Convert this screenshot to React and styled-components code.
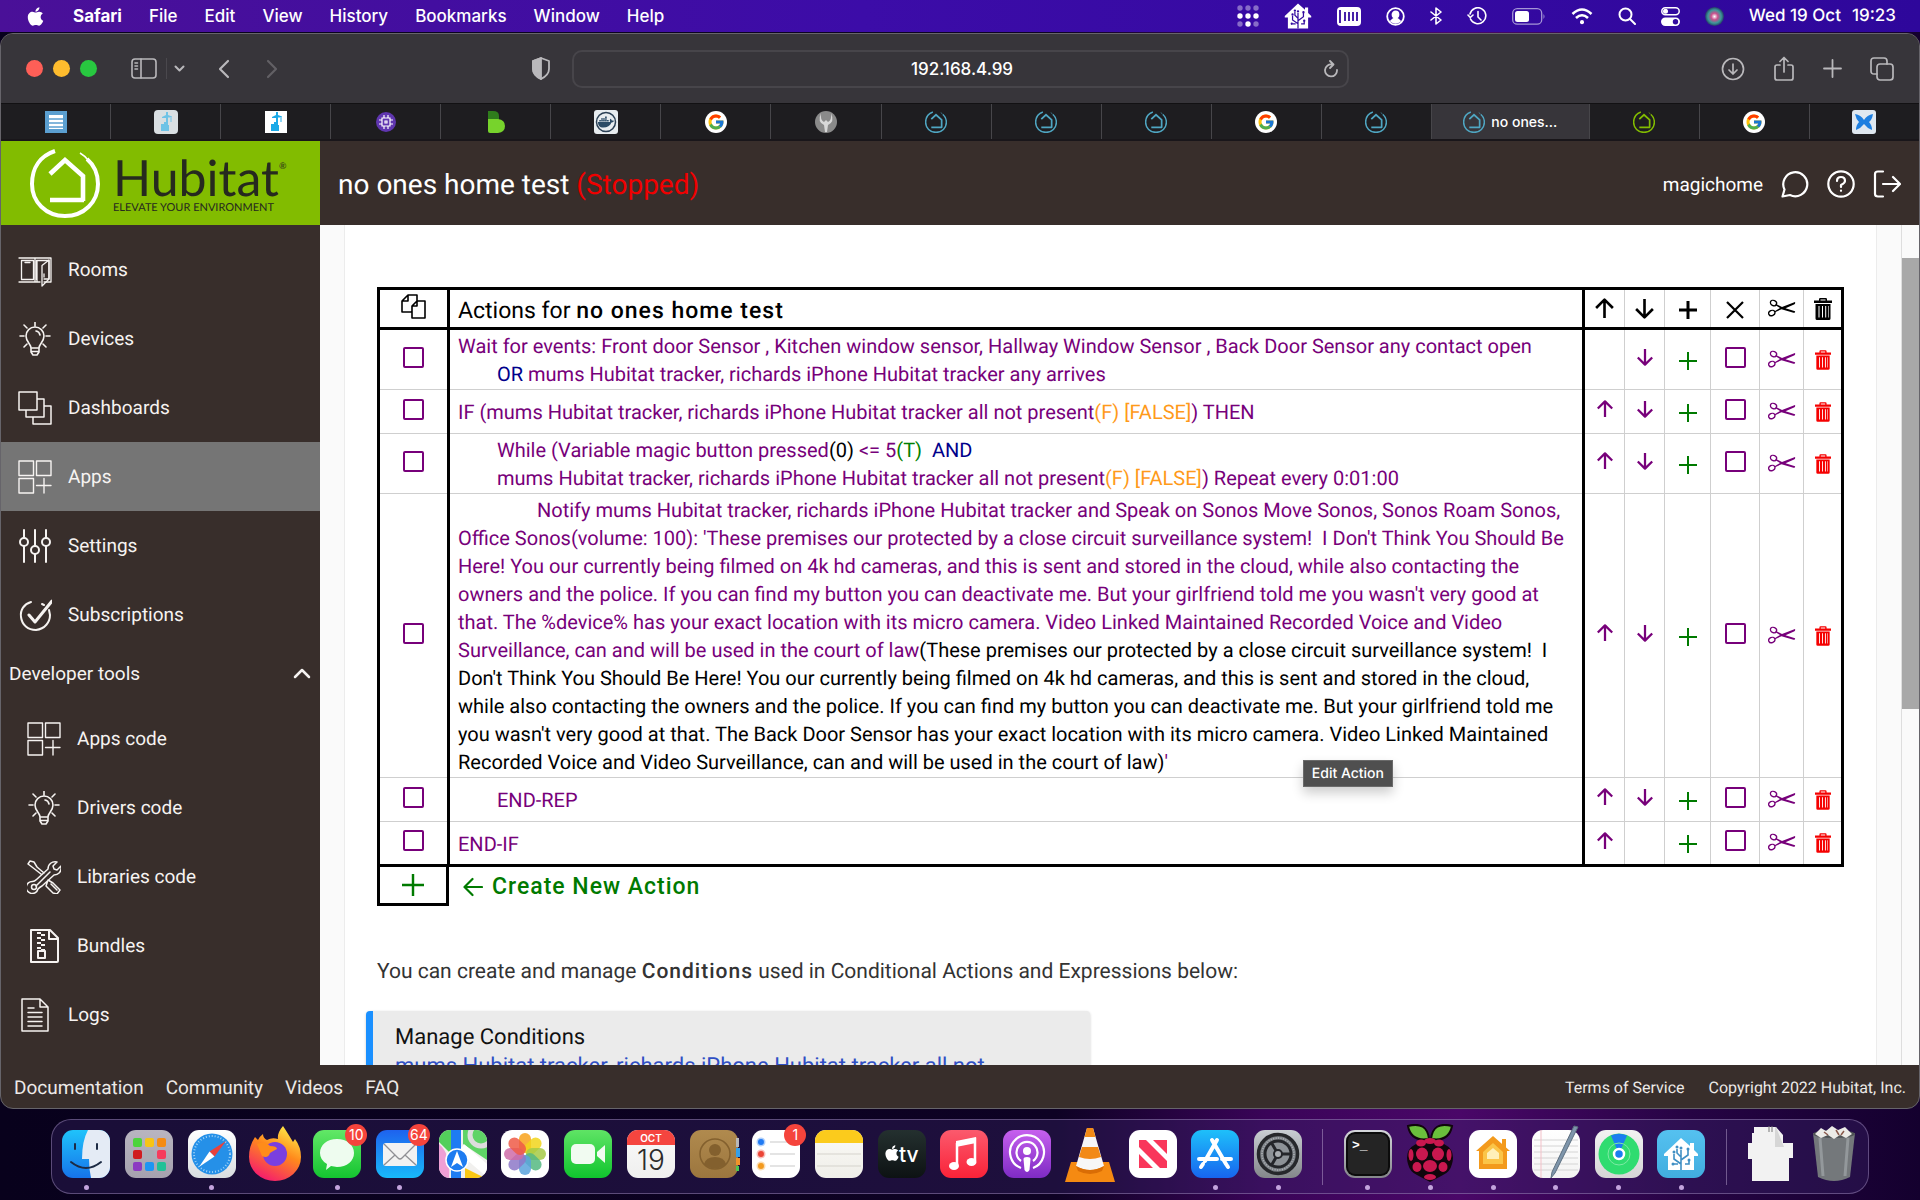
/**
*
* App
*
*/

import React from 'react';
import styled, { createGlobalStyle, css } from 'styled-components';
import { FaApple, FaDocker } from 'react-icons/fa';
import { FcGoogle } from 'react-icons/fc';

const PURPLE = '#77007a';
const BROWN = '#382e2b';

const GlobalStyle = createGlobalStyle`
  * { box-sizing: border-box; }
  html, body, #root { height: 100%; }
  body {
    margin: 0;
    overflow: hidden;
    font-family: Roboto, sans-serif;
    background: #08011c;
    text-rendering: geometricPrecision;
  }
  button {
    margin: 0;
    padding: 0;
    border: 0;
    background: none;
    font: inherit;
    color: inherit;
  }
  a { color: inherit; text-decoration: none; }
  svg { display: block; flex: none; }
`;

const Desktop = styled.div`
  display: flex;
  flex-direction: column;
  height: 100vh;
  background: linear-gradient(90deg, #08011c 0%, #0e0224 55%, #3a0458 66%, #4a0768 76%, #260444 88%, #14002e 100%);
`;

/* ---------- menu bar ---------- */

const MenuBar = styled.header`
  display: flex;
  flex: none;
  align-items: center;
  justify-content: space-between;
  height: 32px;
  padding: 0 24px 0 25px;
  background: linear-gradient(90deg, #4a1098 0%, #3c0ca8 45%, #2e079b 100%);
  color: #fff;
  font-family: Inter, sans-serif;
  font-size: 17px;
  font-weight: 500;
`;

const MenuGroup = styled.nav`
  display: flex;
  align-items: center;
  gap: 27px;
`;

const MenuItem = styled.button`
  font-weight: ${props => (props.$strong ? 700 : 500)};
`;

const StatusGroup = styled.div`
  display: flex;
  align-items: center;
  gap: 25px;
`;

const Clock = styled.time`
  display: flex;
  gap: 11px;
`;

/* ---------- browser window ---------- */

const BrowserWindow = styled.section`
  display: flex;
  flex: 1;
  flex-direction: column;
  min-height: 0;
  margin-top: 1px;
  border: 1px solid #66646a;
  border-radius: 13px;
  background: ${BROWN};
  overflow: hidden;
`;

const Toolbar = styled.div`
  display: grid;
  grid-template-columns: 1fr 777px 1fr;
  align-items: center;
  flex: none;
  height: 69px;
  background: #37353a;
  color: #b9b8bb;
`;

const ToolbarLeft = styled.div`
  display: flex;
  align-items: center;
  padding: 0 21px 0 25px;
`;

const ToolbarRight = styled.div`
  display: flex;
  align-items: center;
  justify-content: flex-end;
  gap: 28px;
  padding-right: 25px;
`;

const Lights = styled.div`
  display: flex;
  gap: 10px;
  margin-right: 34px;
`;

const Light = styled.button`
  width: 17px;
  height: 17px;
  border-radius: 50%;
  background: ${props => props.$color};
`;

const SidebarGroup = styled.div`
  display: flex;
  align-items: center;
  margin-right: 33px;
`;

const SidebarToggle = styled.button`
  padding-right: 9px;
  margin-right: 7px;
  border-right: 1px solid #4a484d;
`;

const HistoryButtons = styled.div`
  display: flex;
  gap: 36px;
`;

const ShieldButton = styled.button`
  margin-left: auto;
`;

const AddressBar = styled.div`
  display: flex;
  align-items: center;
  height: 38px;
  padding: 0 8px 0 28px;
  border: 2px solid #47454a;
  border-radius: 10px;
`;

const AddressInput = styled.input`
  flex: 1;
  min-width: 0;
  border: 0;
  outline: 0;
  background: none;
  color: #fff;
  font-family: Inter, sans-serif;
  font-size: 17px;
  font-weight: 500;
  text-align: center;
`;

const TabStrip = styled.div`
  display: flex;
  flex: none;
  height: 38px;
  background: #1e1d20;
  border-top: 1px solid #121113;
  border-bottom: 2px solid #19161a;
`;

const Tab = styled.button`
  display: flex;
  flex: 1;
  align-items: center;
  justify-content: center;
  gap: 6px;
  border-left: 1px solid #47464a;
  color: #fff;
  font-family: Inter, sans-serif;
  font-size: 14px;
  font-weight: 500;
  &:first-child { border-left: 0; }
  ${props => props.$active && css`
    flex: 0 0 158px;
    background: #37353a;
  `}
`;

/* ---------- hub page ---------- */

const HubHeader = styled.header`
  display: flex;
  flex: none;
  height: 84px;
  background: ${BROWN};
  color: #fff;
`;

const Brand = styled.a`
  display: flex;
  align-items: center;
  gap: 13px;
  width: 319px;
  padding-left: 29px;
  background: #82bc00;
  color: #26291f;
  font-family: Lato, sans-serif;
`;

const BrandText = styled.span`
  display: flex;
  flex-direction: column;
`;

const BrandName = styled.span`
  display: flex;
  font-size: 50px;
  line-height: 50px;
`;

const Registered = styled.sup`
  font-size: 9px;
  line-height: 28px;
`;

const BrandTag = styled.span`
  font-size: 11px;
  line-height: 12px;
  white-space: nowrap;
`;

const HubTitle = styled.h1`
  flex: 1;
  margin: 0;
  padding: 1px 0 0 18px;
  font-size: 28px;
  font-weight: 400;
  line-height: 86px;
`;

const Stopped = styled.span`
  color: #f00000;
`;

const HubTools = styled.div`
  display: flex;
  align-items: center;
  gap: 18px;
  padding: 2px 18px 0 0;
  font-size: 19px;
`;

const HubBody = styled.div`
  display: flex;
  flex: 1;
  min-height: 0;
`;

const SideNav = styled.nav`
  flex: none;
  width: 319px;
  padding-top: 10px;
  color: #f6f3f1;
  overflow: hidden;
`;

const NavLink = styled.a`
  display: flex;
  align-items: center;
  gap: 16px;
  height: 69px;
  padding-left: ${props => (props.$nested ? 26 : 17)}px;
  background: ${props => (props.$active ? '#757575' : 'none')};
  font-size: 19px;
`;

const NavSection = styled.button`
  display: flex;
  align-items: center;
  justify-content: space-between;
  width: 100%;
  height: 48px;
  margin-bottom: 7px;
  padding: 0 9px 0 8px;
  font-size: 19px;
`;

const Scroller = styled.div`
  display: flex;
  flex: 1;
  min-width: 0;
  background: #fafafa;
`;

const Card = styled.main`
  flex: 1;
  min-width: 0;
  margin: 0 24px;
  padding: 62px 32px 0;
  border: solid #ececec;
  border-width: 0 1px;
  background: #fff;
  overflow: hidden;
`;

const ScrollTrack = styled.div`
  flex: none;
  width: 18px;
  padding-top: 33px;
  border-left: 1px solid #dedede;
`;

const ScrollThumb = styled.div`
  height: 451px;
  background: #a8a8a8;
`;

/* ---------- actions table ---------- */

const ActionTable = styled.table`
  width: 100%;
  table-layout: fixed;
  border-collapse: collapse;
  color: #000;
  font-size: 20px;
  line-height: 28px;
`;

const Col = styled.col`
  width: ${props => props.$width}px;
`;

const HeadRow = styled.tr`
  height: 40px;
  border: 3px solid #000;
`;

const ActionRow = styled.tr`
  height: 44px;
  border-bottom: 1px solid #cfcfcf;
  color: ${PURPLE};
  &:last-child { border-bottom: 3px solid #000; }
`;

const MarkCell = styled.td`
  padding: 0;
  border-left: 3px solid #000;
  border-right: 3px solid #000;
`;

const TextCell = styled.td`
  padding: 2px 8px 1px;
  border-right: 3px solid #000;
`;

const HeadText = styled.th`
  padding: 4px 8px 0;
  border-right: 3px solid #000;
  font-size: 23px;
  font-weight: 400;
  text-align: left;
`;

const ToolCell = styled.td`
  padding: 0;
  border-right: 1px solid #cfcfcf;
  &:last-child { border-right: 3px solid #000; }
`;

const CellBox = styled.div`
  display: flex;
  align-items: center;
  justify-content: center;
  padding-bottom: ${props => props.$lift || 0}px;
  padding-top: ${props => props.$drop || 0}px;
`;

const Strong = styled.b`
  font-weight: 500;
  letter-spacing: 1px;
`;

const Tick = styled.input`
  appearance: none;
  width: 21px;
  height: 21px;
  margin: 0;
  border: 2px solid ${PURPLE};
  border-radius: 2px;
`;

const ActionText = styled.div`
  position: relative;
  padding-left: ${props => (props.$indent ? 39 : 0)}px;
  text-indent: ${props => (props.$first ? 79 : 0)}px;
`;

const Indented = styled.div`
  padding-left: 39px;
`;

const Ink = styled.span`
  color: ${props => props.$color};
`;

const Tooltip = styled.span`
  position: absolute;
  right: 181px;
  bottom: -11px;
  padding: 0 8px;
  border: 1px solid #6a6a6a;
  background: #4f4f4f;
  box-shadow: 0 6px 12px rgba(0, 0, 0, .2);
  color: #fff;
  font-family: Inter, sans-serif;
  font-size: 14px;
  font-weight: 500;
  line-height: 25px;
  text-indent: 0;
`;

const NewRow = styled.div`
  display: flex;
  align-items: center;
  height: 39px;
  color: #007a00;
`;

const NewMark = styled.button`
  display: flex;
  align-items: center;
  justify-content: center;
  width: 72px;
  height: 39px;
  border: solid #000;
  border-width: 0 3px 3px;
`;

const NewButton = styled.button`
  display: flex;
  align-items: center;
  gap: 9px;
  padding-left: 14px;
  font-size: 23px;
  font-weight: 500;
  letter-spacing: 1px;
`;

const Note = styled.p`
  margin: 51px 0 0;
  color: #333;
  font-size: 21px;
  line-height: 30px;
`;

const ManageBox = styled.a`
  display: block;
  width: calc(50% - 10px);
  margin: 24px 0 0 -11px;
  padding: 12px 22px;
  border-left: 7px solid #1a90ff;
  border-radius: 4px;
  background: #ebebeb;
  box-shadow: 0 1px 3px rgba(0, 0, 0, .2);
  color: #2f4fc4;
  font-size: 22px;
  line-height: 28px;
`;

const ManageTitle = styled.div`
  color: #111;
  line-height: 30px;
`;

const HubFooter = styled.footer`
  display: flex;
  flex: none;
  align-items: center;
  justify-content: space-between;
  height: 43px;
  padding: 1px 13px 0;
  color: #ece9e7;
`;

const FooterLinks = styled.div`
  display: flex;
  gap: ${props => (props.$small ? 24 : 22)}px;
  font-size: ${props => (props.$small ? 16 : 19)}px;
`;

/* ---------- dock ---------- */

const DockArea = styled.footer`
  flex: none;
  padding: 10px 51px 6px;
`;

const Dock = styled.div`
  display: flex;
  height: 75px;
  padding: 0 3px;
  border: 1px solid rgba(170, 150, 200, .45);
  border-radius: 20px;
  background: rgba(60, 40, 110, .35);
`;

const DockItem = styled.button`
  display: flex;
  flex: 1;
  flex-direction: column;
  align-items: center;
  gap: 7px;
  padding-top: 10px;
  min-width: 0;
`;

const DockIcon = styled.span`
  position: relative;
  width: 48px;
  height: 48px;
`;

const Badge = styled.span`
  position: absolute;
  top: -6px;
  right: -6px;
  width: 22px;
  height: 22px;
  border-radius: 50%;
  background: #f5443c;
  color: #fff;
  font-family: Inter, sans-serif;
  font-size: 14px;
  line-height: 22px;
  text-align: center;
`;

const Running = styled.span`
  width: 5px;
  height: 5px;
  border-radius: 50%;
  background: #c3a4dd;
`;

const DockDivider = styled.span`
  flex: none;
  width: 1px;
  height: 56px;
  margin: 9px 13px 0;
  background: rgba(200, 180, 220, .45);
`;

/* ---------- drawings ---------- */

const Line = ({ w = 24, h, box, sw = 2, children }) => (
  <svg width={w} height={h || w} viewBox={box || `0 0 ${w} ${h || w}`} fill="none" stroke="currentColor" strokeWidth={sw} strokeLinecap="round" strokeLinejoin="round" aria-hidden="true">
    {children}
  </svg>
);

const HubMark = ({ size, color, sw = 1 }) => (
  <svg width={size} height={size} viewBox="0 0 70 70" fill="none" stroke={color} aria-hidden="true">
    <path d="M25 3C10 8 2 20 2 36c0 18 14 32 33 32s33-14 33-32c0-11-4-19-11-25" strokeWidth={4 * sw} />
    <path d="M58 12Q55 8 50 5" strokeWidth={1.5 * sw} />
    <path d="M20 26 35 12 53 28V53M54 52H20" strokeWidth={4.6 * sw} />
  </svg>
);

const RoomsIcon = () => (
  <Line w={34} sw={1.3}>
    <path d="M1 5h32v24h-7M22 29H1zM3.500 7.500h12v19h-12zM17 5v24M19 29V7.500h12M31 7.500V26h-5M18.500 7.500v19M7 9.500h5" />
    <path d="M24 12.500 31 7v19l-7 7zM26 21v3" />
  </Line>
);

const BulbIcon = () => (
  <Line w={34} sw={1.6}>
    <path d="M13 26c0-4-5-6-5-12a9 9 0 0 1 18 0c0 6-5 8-5 12zM13 26v4l2 3h4l2-3v-4M13 29.500h8M18 9a5 5 0 0 1 4 4M17 0v4M2 14h4M28 14h4M6 3l3 3M28 3l-3 3M6 25l3-3M28 25l-3-3" />
  </Line>
);

const DashIcon = () => (
  <Line w={34} sw={1.5}>
    <path d="M1 1h18v18H1zM19 8h7v18H8v-7M26 15h7v18H15v-7" />
  </Line>
);

const AppsIcon = () => (
  <Line w={34} sw={1.4}>
    <path d="M1 1h14.500v14.500H1zM18.500 1H33v14.500H18.500zM1 18.500h14.500V33H1zM18.500 25.500H33M26 18.500V33" />
  </Line>
);

const SlidersIcon = () => (
  <Line w={34} sw={2}>
    <path d="M6 1v8M6 17v16M17 1v16M17 25v8M28 1v8M28 17v16" />
    <circle cx="6" cy="13" r="4" />
    <circle cx="17" cy="21" r="4" />
    <circle cx="28" cy="13" r="4" />
  </Line>
);

const CheckIcon = () => (
  <Line w={34}>
    <path d="M13 4C6 6 2 12 3 19c1 8 7 13 15 13 9-1 14-8 14-15l-1-5M24 6l2 1" />
    <path d="M11 17l6 7L34 3" strokeWidth="3" />
  </Line>
);

const ToolsIcon = () => (
  <Line w={34} sw={1.5}>
    <path d="M11 29a6 6 0 1 1-5.500-7.500c2 0 3-1 4-2L21 9c0-5 4-8 9-7l-4 4 1 3 3 1 4-4c1 6-3 9-7 9L15 26c-2 1-3 2-4 3zM9 26l14-14M14 14 5 7 1 4l2-3 4 1 3 5 7 6M21 20l5 3 7 7-3 4-4-1-7-7zM24 24l6 6" />
    <circle cx="7" cy="27" r="2.500" />
  </Line>
);

const ZipIcon = () => (
  <Line w={34} sw={2}>
    <path d="M5 1h18l8 8v23a1 1 0 0 1-1 1H4V1zM22 1v9h9" />
    <path d="M12 3v17M16 5v17" strokeWidth="4" strokeDasharray="2 3" strokeLinecap="butt" />
    <path d="M11 22h7v7h-7z" />
  </Line>
);

const LogIcon = () => (
  <Line w={34} sw={1.5}>
    <path d="M4 1h18l8 8v24H4zM22 1v8h8M10 10h6M10 14.500h14M10 19h14M10 23.500h14M10 28h14" />
  </Line>
);

const UpIcon = ({ big }) => (
  <Line w={big ? 21 : 18} box="0 0 20 20" sw={2.500}><path d="M10 19V2M2 9.500 10 1.500l8 8" strokeLinecap="butt" /></Line>
);

const DownIcon = ({ big }) => (
  <Line w={big ? 21 : 18} box="0 0 20 20" sw={2.500}><path d="M10 1v17M2 10.500l8 8 8-8" strokeLinecap="butt" /></Line>
);

const PlusIcon = ({ size = 18, sw = 2 }) => (
  <Line w={size} box="0 0 18 18" sw={sw}><path d="M9 0v18M0 9h18" strokeLinecap="butt" /></Line>
);

const CrossIcon = () => (
  <Line w={18} sw={2.2}><path d="M1 1l16 16M17 1 1 17" strokeLinecap="butt" /></Line>
);

const ScissorsIcon = () => (
  <svg width="28" height="18" viewBox="0 0 28 18" aria-hidden="true">
    <g fill="none" stroke="currentColor" strokeWidth="1.300">
      <ellipse cx="5.500" cy="4" rx="3.200" ry="2.600" transform="rotate(25 5.500 4)" />
      <ellipse cx="3.800" cy="14" rx="3.200" ry="2.600" transform="rotate(-25 3.800 14)" />
    </g>
    <path d="M8 5 14 8 27 3c.5 1.200 0 2-1 2.400L17.500 9.300l9.500 2.900c.4 1-.3 1.800-1.500 1.600L13.500 10.300 7 13.200l-.4-1 5.400-3.200-4.400-2.700z" fill="currentColor" />
  </svg>
);

const TrashIcon = ({ big }) => (
  <svg width={big ? 18 : 16} height={big ? 22 : 20} viewBox="0 0 18 22" aria-hidden="true">
    <path d="M0 2.500h5V1.200Q5 0 6.200 0h5.600Q13 0 13 1.200v1.300h5V5H0zM6.500 2.500h5v-1h-5zM1.500 6h15v14.500q0 1.500-1.500 1.500H3q-1.500 0-1.500-1.500zM4.500 8v11.500h1V8zM8 8v11.500h1V8zM11.200 8v11.500h1V8zM14 8v11.500h.6V8z" fill="currentColor" fillRule="evenodd" />
  </svg>
);

const CopyIcon = () => (
  <Line w={26} sw={1.6}>
    <path d="M10 18H1V7l6-6h9v6M7 1v6H1M11 12l5-5h8v17H11zM16 7v5h-5" />
  </Line>
);

/* favicons */

const CraneIcon = ({ soft }) => (
  <svg width="24" height="24" viewBox="0 0 24 24">
    <rect x={soft ? 0 : 1} y={soft ? 0 : 1} width={soft ? 24 : 22} height={soft ? 24 : 22} rx={soft ? 4 : 0} fill={soft ? '#d9dfe2' : '#fff'} />
    <path d="M12 2h2v3l4 1.500v1h-4V15h1v6H7v-7h3v-2h2V8H8V7l4-2zM16.500 8h1v4h-1z" fill={soft ? '#6fc3e6' : '#1caae8'} />
  </svg>
);

const tabs = [
  { name: 'Forms', icon: <svg width="22" height="22"><rect width="22" height="22" fill="#5b9fd0" /><rect x="4" y="4" width="14" height="14" fill="#fff" /><path d="M4 8h14M4 12h14M4 16h14" stroke="#5b9fd0" strokeWidth="1.500" /></svg> },
  { name: 'Portainer', icon: <CraneIcon soft /> },
  { name: 'Portainer 2', icon: <CraneIcon /> },
  { name: 'Firmware', icon: <svg width="20" height="20"><circle cx="10" cy="10" r="10" fill="#6036b0" /><path d="M6 6h8v8H6zM9 9h2v2H9zM8 3v3M12 3v3M8 14v3M12 14v3M3 8h3M3 12h3M14 8h3M14 12h3" fill="none" stroke="#fff" strokeWidth="1.200" /></svg> },
  { name: 'Blynk', icon: <svg width="18" height="22"><path d="M1 0h5q6 0 6 5v5H1z" fill="#2f7d1c" /><path d="M1 8h10q7 1 7 7t-7 7H3q-2 0-2-2z" fill="#77d32c" /></svg> },
  { name: 'Docker', icon: <svg width="24" height="24"><rect width="24" height="24" rx="3" fill="#e8edf0" /><circle cx="12" cy="12" r="9.500" fill="none" stroke="#2b4055" strokeWidth="1.500" /><FaDocker x="4" y="4" size={16} color="#2b4b66" /></svg> },
  { name: 'Google', google: true },
  { name: 'Claw', icon: <svg width="22" height="22"><circle cx="11" cy="11" r="11" fill="#8a8a8a" /><path d="M6 2q-4 9 3 12l1 7h2l1-7q7-3 3-12 1 7-3 9l-2-2-2 2Q5 9 6 2z" fill="#d8d8d8" /></svg> },
  { name: 'Hub', hub: '#4fa6c2' },
  { name: 'Hub devices', hub: '#4fa6c2' },
  { name: 'Hub apps', hub: '#4fa6c2' },
  { name: 'Google search', google: true },
  { name: 'Hub logs', hub: '#4fa6c2' },
  { name: 'no ones home test', hub: '#4fa6c2', label: 'no ones...' },
  { name: 'Community', hub: '#82bc00' },
  { name: 'Google results', google: true },
  { name: 'Butterfly', icon: <svg width="24" height="24"><rect width="24" height="24" rx="3" fill="#dfe8f0" /><path d="M3 4q6 1 9 6 3-5 9-6-1 6-4 8 3 3 3 8-5-2-8-6-3 4-8 6 0-5 3-8Q4 9 3 4z" fill="#1d7fe0" /></svg> },
];

const TabIcon = ({ tab }) => {
  if (tab.hub) return <HubMark size={22} color={tab.hub} sw={1.2} />;
  if (tab.google) {
    return (
      <svg width="22" height="22">
        <circle cx="11" cy="11" r="11" fill="#fff" />
        <FcGoogle x="2" y="2" size={18} />
      </svg>
    );
  }
  return tab.icon;
};

/* dock pictures, each on a 48px tile */

const Tile = ({ id, from, to, children }) => (
  <svg width="48" height="48" viewBox="0 0 48 48" overflow="visible" aria-hidden="true">
    <defs>
      <linearGradient id={`g-${id}`} x1="0" y1="0" x2="0" y2="1">
        <stop offset="0" stopColor={from} />
        <stop offset="1" stopColor={to || from} />
      </linearGradient>
      <clipPath id={`c-${id}`}><rect width="48" height="48" rx="11" /></clipPath>
    </defs>
    <rect width="48" height="48" rx="11" fill={`url(#g-${id})`} />
    {children}
  </svg>
);

const Finder = () => (
  <Tile id="finder" from="#1fc3fb" to="#1673ea">
    <path d="M26 0h11a11 11 0 0 1 11 11v26a11 11 0 0 1-11 11h-8q-2-9-2-19h-7Q20 11 26 0z" fill="#e4ebf5" />
    <path d="M13 14v5M35 14v5M9 32q15 12 30 0" fill="none" stroke="#1d2b44" strokeWidth="2" strokeLinecap="round" />
  </Tile>
);

const padColors = ['#4cd43c', '#f7c415', '#f58b12', '#d01c20', '#a9adb5', '#f63b5c', '#8c3ac2', '#1f95f3', '#22c197'];

const Launchpad = () => (
  <Tile id="launch" from="#b9b5c0" to="#a5a1ae">
    {padColors.map((color, i) => (
      <rect key={color} x={8 + (i % 3) * 12} y={8 + Math.floor(i / 3) * 12} width="9" height="9" rx="2" fill={color} />
    ))}
  </Tile>
);

const Safari = () => (
  <Tile id="safari" from="#fff" to="#d9dde0">
    <circle cx="24" cy="24" r="20.500" fill="#2590e8" />
    <circle cx="24" cy="24" r="18" fill="none" stroke="#9fd2f7" strokeWidth="2" strokeDasharray="1 2" />
    <path d="M38 11 21.500 21.500l5 5z" fill="#e8413c" />
    <path d="M11 37 21.500 21.500l5 5z" fill="#fff" />
  </Tile>
);

const FoxSvg = styled.svg`
  margin: -4px 0 0 -2px;
`;

const Firefox = () => (
  <FoxSvg width="52" height="56" viewBox="0 0 52 56" aria-hidden="true">
    <defs>
      <linearGradient id="fox" x1=".8" y1="0" x2=".3" y2="1">
        <stop offset="0" stopColor="#fff04a" />
        <stop offset=".45" stopColor="#ff8a1c" />
        <stop offset="1" stopColor="#f5196f" />
      </linearGradient>
    </defs>
    <path d="M34 0q-6 7-5 13-6-2-11 1-4-2-4-6-4 3-5 6l-3-3Q0 20 0 31a26 24 0 0 0 52 0q0-10-6-18l-2 3Q38 6 34 0z" fill="url(#fox)" />
    <circle cx="26" cy="28" r="12" fill="#7a3fe0" />
    <path d="M8 18q8-4 13 2 7 0 7 3-4 2-7 4-2 6-8 3z" fill="#ff8c1a" />
  </FoxSvg>
);

const Messages = () => (
  <Tile id="msg" from="#62e867" to="#14c430">
    <path d="M24 9c10 0 17 6 17 14s-7 14-17 14l-6-1-5 4 1-6q-7-4-7-11C7 15 14 9 24 9z" fill="#eefcef" />
  </Tile>
);

const Mail = () => (
  <Tile id="mail" from="#1e62ee" to="#18b9fa">
    <rect x="7" y="13" width="34" height="23" rx="3" fill="#f2f2f2" />
    <path d="M8 14l14 14q2 2 4 0l14-14M8 35l11-10M40 35 29 25" fill="none" stroke="#8f8f94" strokeWidth="1.300" />
  </Tile>
);

const Maps = () => (
  <Tile id="maps" from="#f1f0ee">
    <g clipPath="url(#c-maps)">
      <path d="M0 0h12v24L0 12z" fill="#53cf5b" />
      <path d="M24 0h24v30L24 14z" fill="#5fd466" />
      <path d="M0 14q12 10 10 34H0z" fill="#ef9fd5" />
      <path d="M22 18l30 26" stroke="#fff" strokeWidth="10" />
      <path d="M26 48V38l20 10z" fill="#fbc814" />
      <path d="M12 0h10v48H12z" fill="#1e7cf2" />
      <circle cx="42" cy="5" r="11" fill="none" stroke="#ddd" strokeWidth="5" />
    </g>
    <circle cx="18" cy="30" r="11" fill="#1d7bf0" stroke="#fff" strokeWidth="1.500" />
    <path d="M18 21l6 16-6-4-6 4z" fill="#fff" />
  </Tile>
);

const petals = ['#f8a21b', '#f1d51b', '#a4ca45', '#55b981', '#5aa3dc', '#8d78c8', '#cf6ba8', '#ee5a46'];

const Photos = () => (
  <Tile id="photos" from="#fff">
    {petals.map((color, i) => (
      <rect key={color} x="18" y="3" width="12" height="20" rx="6" fill={color} opacity=".85" transform={`rotate(${i * 45} 24 24)`} />
    ))}
  </Tile>
);

const FaceTime = () => (
  <Tile id="ft" from="#5fe465" to="#10c52e">
    <rect x="7" y="14" width="24" height="20" rx="5" fill="#f1fbf1" />
    <path d="M33 22l8-7v18l-8-7z" fill="#f1fbf1" />
  </Tile>
);

const CalendarIcon = () => (
  <Tile id="cal" from="#fafafa" to="#efefee">
    <path d="M0 15V11A11 11 0 0 1 11 0h26a11 11 0 0 1 11 11v4z" fill="#f5453f" />
    <text x="24" y="12" fill="#fff" fontFamily="Inter, sans-serif" fontSize="10" fontWeight="600" textAnchor="middle">OCT</text>
    <text x="24" y="40" fill="#2b2b2b" fontFamily="Inter, sans-serif" fontSize="28" fontWeight="300" textAnchor="middle">19</text>
  </Tile>
);

const Contacts = () => (
  <Tile id="contacts" from="#b08a4e" to="#9c763e">
    <path d="M46 8h3v9h-3z" fill="#b9b9b9" />
    <path d="M46 18h4v9h-4z" fill="#35a0e8" />
    <path d="M46 28h4v7h-4z" fill="#f2932a" />
    <path d="M46 36h3v5h-3z" fill="#4fc650" />
    <circle cx="25" cy="24" r="15" fill="none" stroke="#83602e" strokeWidth="1.500" />
    <circle cx="25" cy="20" r="6" fill="#83602e" />
    <path d="M14 34q2-7 11-7t11 7q-11 9-22 0z" fill="#83602e" />
  </Tile>
);

const Reminders = () => (
  <Tile id="rem" from="#fff">
    {['#217bf3', '#ec4537', '#f39a1f'].map((color, i) => (
      <g key={color}>
        <circle cx="9" cy={12 + i * 12} r="3" fill={color} stroke={color} strokeOpacity=".35" strokeWidth="3" />
        <path d={`M18 ${12 + i * 12}h25`} stroke="#c9c9c9" />
      </g>
    ))}
  </Tile>
);

const Notes = () => (
  <Tile id="notes" from="#fbfaf6" to="#efeee9">
    <path d="M0 13V11A11 11 0 0 1 11 0h26a11 11 0 0 1 11 11v2z" fill="#fbcb1c" />
    <path d="M2 24h44M2 36h44" stroke="#d5d3cc" />
  </Tile>
);

const AppleTv = () => (
  <Tile id="tv" from="#24302f" to="#0d1213">
    <FaApple x="5" y="14" size={18} color="#fff" />
    <text x="21" y="32" fill="#fff" fontFamily="Inter, sans-serif" fontSize="21" fontWeight="500">tv</text>
  </Tile>
);

const Music = () => (
  <Tile id="music" from="#fb5a6d" to="#fa2238">
    <path d="M17 13l18-4v22" fill="none" stroke="#fff" strokeWidth="2.500" />
    <path d="M16 11l20-4v6l-20 4z" fill="#fff" />
    <path d="M17 13v22" stroke="#fff" strokeWidth="2.500" />
    <ellipse cx="14" cy="36" rx="5" ry="4" fill="#fff" />
    <ellipse cx="31.500" cy="32" rx="5" ry="4" fill="#fff" />
  </Tile>
);

const Podcasts = () => (
  <Tile id="pod" from="#c660ee" to="#7e2bc4">
    <path d="M18 38a17 17 0 1 1 12 0M18 31a10.500 10.500 0 1 1 12 0" fill="none" stroke="#fff" strokeWidth="2.200" />
    <circle cx="24" cy="21" r="4" fill="#fff" />
    <path d="M20.500 29q0-2 3.500-2t3.500 2l-1 11q-2.500 4-5 0z" fill="#fff" />
  </Tile>
);

const VlcSvg = styled.svg`
  margin: -2px 0 0 -1px;
`;

const Vlc = () => (
  <VlcSvg width="50" height="56" viewBox="0 0 50 56" aria-hidden="true">
    <path d="M6 34h38l6 20H0z" fill="#f58a12" />
    <path d="M22 0h6l11 38q-14 8-28 0z" fill="#f7f7f7" />
    <path d="M22 0h6l2.500 9h-11zM17 19h16l3 10q-11 4-22 0z" fill="#f28a16" />
    <path d="M11 38q14 8 28 0l-2 5q-12 6-24 0z" fill="#d96d05" />
  </VlcSvg>
);

const NewsIcon = () => (
  <Tile id="news" from="#fff">
    <path d="M10 10h7l21 21v7h-7L10 17zM24 10h14v14zM10 24l14 14H10z" fill="#f9365a" />
  </Tile>
);

const AppStore = () => (
  <Tile id="store" from="#1ec0fa" to="#1765ef">
    <path d="M26 10 14 31M21 10l14 24M8 29h18M31 29h9M12 34l-2 3M35 34l2 3" fill="none" stroke="#fff" strokeWidth="4" strokeLinecap="round" />
  </Tile>
);

const Preferences = () => (
  <Tile id="prefs" from="#c9ced2" to="#84878a">
    <circle cx="24" cy="24" r="19.500" fill="#7d8287" stroke="#26282b" strokeWidth="3.500" />
    <circle cx="24" cy="24" r="16" fill="none" stroke="#b0b4b8" strokeWidth="1.500" strokeDasharray="1 1.500" />
    <circle cx="24" cy="24" r="13" fill="#8d9297" stroke="#24262a" strokeWidth="3" />
    <path d="M24 24h14M24 24l-7-12M24 24l-7 12" stroke="#24262a" strokeWidth="3" />
    <circle cx="24" cy="24" r="4" fill="#a9adb1" stroke="#24262a" strokeWidth="2" />
  </Tile>
);

const TerminalIcon = () => (
  <Tile id="term" from="#d5d7db" to="#85878b">
    <rect x="2" y="2" width="44" height="44" rx="9" fill="#0b0b0b" />
    <rect x="4" y="4" width="40" height="40" rx="7" fill="#242424" />
    <text x="8" y="19" fill="#fff" fontFamily="Liberation Mono, monospace" fontSize="13" fontWeight="700">&gt;_</text>
  </Tile>
);

const berries = [[24, 17, 6, 3], [15, 19, 5, 3.5], [33, 19, 5, 3.5], [16, 30, 6, 6.5], [32, 30, 6, 6.5], [24, 42, 7, 6], [5, 31, 2.5, 6], [43, 31, 2.5, 6], [11, 43, 4.5, 5], [37, 43, 4.5, 5], [24, 53, 6, 3]];

const BerrySvg = styled.svg`
  margin-top: -6px;
`;

const Raspberry = () => (
  <BerrySvg width="48" height="58" viewBox="0 0 48 58" aria-hidden="true">
    <path d="M24 14q-12-1-14 6Q-2 26 2 40q2 8 9 11l13 7 13-7q7-3 9-11 4-14-8-20-2-7-14-6z" fill="#10060c" />
    <path d="M23 15Q5 18 2 2 21-3 23 15zM25 15Q43 18 46 2 27-3 25 15z" fill="#6abf3c" stroke="#10060c" strokeWidth="2" />
    {berries.map(([x, y, rx, ry]) => <ellipse key={`${x}-${y}`} cx={x} cy={y} rx={rx} ry={ry} fill="#c9184f" />)}
  </BerrySvg>
);

const HomeIcon = () => (
  <Tile id="home" from="#fff">
    <path d="M24 6 41 21h-3v18H10V21H7zM33 9h4v9h-4z" fill="#f39a1c" />
    <path d="M24 13 34 22v12H14V22z" fill="#fbc548" />
    <path d="M24 18l6 5v6H18v-6z" fill="#fff0b8" />
  </Tile>
);

const TextEdit = () => (
  <Tile id="text" from="#fff" to="#f3f3f3">
    <path d="M2 10h44M2 16h44M2 22h44M2 28h44M2 34h44M2 40h44" stroke="#d4d4d4" />
    <path d="M9 0v48" stroke="#f3c0c8" />
    <path d="M42-4l4 1-23 46-4 5 1-6z" fill="#7e95ab" stroke="#5d6f80" />
  </Tile>
);

const FindMy = () => (
  <Tile id="find" from="#f2f2f2" to="#d5d5d5">
    <circle cx="24" cy="24" r="20.500" fill="#2fdc70" />
    <path d="M24 24 16 5.500q8-3.500 16 0z" fill="#1b7df0" />
    <circle cx="24" cy="24" r="11" fill="none" stroke="#7eeaa4" />
    <circle cx="24" cy="24" r="5" fill="#1b7df0" stroke="#fff" strokeWidth="2.500" />
  </Tile>
);

const HouseTree = ({ size, house, tree }) => (
  <svg width={size} height={size} viewBox="0 0 36 36" aria-hidden="true">
    <path d="M18 2l9 8V7h4v7l4 4v2h-4v14H5V20H1v-2z" fill={house} />
    <path d="M18 34V14M18 28l-7-5v-5M18 24l7-5v-5M18 21l-4-4v-4M11 28h4M22 28h4v-3" fill="none" stroke={tree} strokeWidth="1.600" />
    <path d="M11 16v.1M25 13v.1M14 11v.1M18 12v.1M26 24v.1M10 28v.1" stroke={tree} strokeWidth="3" strokeLinecap="round" />
  </svg>
);

const HubApp = () => (
  <Tile id="hubapp" from="#55c1f0" to="#41addf">
    <g transform="translate(6 6)"><HouseTree size={36} house="#fff" tree="#3f8fc4" /></g>
  </Tile>
);

const PaperSvg = styled.svg`
  margin-top: -4px;
`;

const Documents = () => (
  <PaperSvg width="48" height="56" viewBox="0 0 48 56" aria-hidden="true">
    <path d="M7 1h22l7 8v8h10v15h-4v23H5V33H1V17h4V7h2z" fill="#f2f2f2" />
    <path d="M29 1l8 20h-9V1z" fill="#d6d6d6" />
    <path d="M22 0v6M25 0v6" stroke="#777" />
  </PaperSvg>
);

const CanSvg = styled.svg`
  margin: -4px 0 0 2px;
`;

const TrashCan = () => (
  <CanSvg width="44" height="56" viewBox="0 0 44 56" aria-hidden="true">
    <path d="M1 7h42l-5 44q-16 8-32 0z" fill="#74787b" />
    <path d="M8 12l3 38M36 12l-3 38" stroke="#93989b" strokeWidth="3" />
    <ellipse cx="22" cy="8" rx="21" ry="4" fill="#4e5254" />
    <path d="M3 8l6-6 5 3 6-5 6 4 7-3 7 7-6 4-6-3-6 4-6-4-7 3z" fill="#ecebe7" />
    <path d="M12 6l4 3M24 4l3 5M32 5l-3 4" stroke="#8a5a4c" strokeWidth="1.500" />
  </CanSvg>
);

const dockMain = [
  { name: 'Finder', Icon: Finder, on: true },
  { name: 'Launchpad', Icon: Launchpad },
  { name: 'Safari', Icon: Safari, on: true },
  { name: 'Firefox', Icon: Firefox },
  { name: 'Messages', Icon: Messages, on: true, badge: 10 },
  { name: 'Mail', Icon: Mail, on: true, badge: 64 },
  { name: 'Maps', Icon: Maps },
  { name: 'Photos', Icon: Photos },
  { name: 'FaceTime', Icon: FaceTime },
  { name: 'Calendar', Icon: CalendarIcon },
  { name: 'Contacts', Icon: Contacts },
  { name: 'Reminders', Icon: Reminders, badge: 1 },
  { name: 'Notes', Icon: Notes },
  { name: 'TV', Icon: AppleTv },
  { name: 'Music', Icon: Music },
  { name: 'Podcasts', Icon: Podcasts },
  { name: 'VLC', Icon: Vlc },
  { name: 'News', Icon: NewsIcon },
  { name: 'App Store', Icon: AppStore, on: true },
  { name: 'System Preferences', Icon: Preferences, on: true },
];

const dockRecent = [
  { name: 'Terminal', Icon: TerminalIcon, on: true },
  { name: 'Raspberry Pi', Icon: Raspberry, on: true },
  { name: 'Home', Icon: HomeIcon, on: true },
  { name: 'TextEdit', Icon: TextEdit, on: true },
  { name: 'Find My', Icon: FindMy, on: true },
  { name: 'Hubitat', Icon: HubApp, on: true },
];

const dockEnd = [
  { name: 'Documents', Icon: Documents },
  { name: 'Trash', Icon: TrashCan },
];

const DockGroup = ({ items }) => items.map(({ name, Icon, on, badge }) => (
  <DockItem key={name} aria-label={name}>
    <DockIcon>
      <Icon />
      {badge && <Badge>{badge}</Badge>}
    </DockIcon>
    {on && <Running />}
  </DockItem>
));

/* ---------- content ---------- */

const navMain = [
  { name: 'Rooms', Icon: RoomsIcon },
  { name: 'Devices', Icon: BulbIcon },
  { name: 'Dashboards', Icon: DashIcon },
  { name: 'Apps', Icon: AppsIcon, active: true },
  { name: 'Settings', Icon: SlidersIcon },
  { name: 'Subscriptions', Icon: CheckIcon },
];

const navTools = [
  { name: 'Apps code', Icon: AppsIcon, nested: true },
  { name: 'Drivers code', Icon: BulbIcon, nested: true },
  { name: 'Libraries code', Icon: ToolsIcon, nested: true },
  { name: 'Bundles', Icon: ZipIcon, nested: true },
  { name: 'Logs', Icon: LogIcon },
];

const NavItems = ({ items }) => items.map(({ name, Icon, nested, active }) => (
  <NavLink key={name} href="#" $nested={nested} $active={active}>
    <Icon />
    {name}
  </NavLink>
));

const False = () => <Ink $color="#ff9a1a">(F) [FALSE]</Ink>;

const actions = [
  {
    id: 1,
    down: true,
    text: (
      <ActionText>
        Wait for events: Front door Sensor , Kitchen window sensor, Hallway Window Sensor , Back Door Sensor any contact open
        <Indented><Ink $color="#00008b">OR</Ink> mums Hubitat tracker, richards iPhone Hubitat tracker any arrives</Indented>
      </ActionText>
    ),
  },
  {
    id: 2,
    up: true,
    down: true,
    text: <ActionText>IF (mums Hubitat tracker, richards iPhone Hubitat tracker all not present<False />) THEN</ActionText>,
  },
  {
    id: 3,
    up: true,
    down: true,
    text: (
      <ActionText $indent>
        While (Variable magic button pressed<Ink $color="#000">(0)</Ink> &lt;= 5<Ink $color="#008000">(T)</Ink>&nbsp; <Ink $color="#00008b">AND</Ink>
        <br />
        mums Hubitat tracker, richards iPhone Hubitat tracker all not present<False />) Repeat every 0:01:00
      </ActionText>
    ),
  },
  {
    id: 4,
    up: true,
    down: true,
    text: (
      <ActionText $first>
        Notify mums Hubitat tracker, richards iPhone Hubitat tracker and Speak on Sonos Move Sonos, Sonos Roam Sonos, Office Sonos(volume: 100): 'These premises our protected by a close circuit surveillance system!&nbsp; I Don't Think You Should Be Here! You our currently being filmed on 4k hd cameras, and this is sent and stored in the cloud, while also contacting the owners and the police. If you can find my button you can deactivate me. But your girlfriend told me you wasn't very good at that. The %device% has your exact location with its micro camera. Video Linked Maintained Recorded Voice and Video Surveillance, can and will be used in the court of law
        <Ink $color="#000">(These premises our protected by a close circuit surveillance system!&nbsp; I Don't Think You Should Be Here! You our currently being filmed on 4k hd cameras, and this is sent and stored in the cloud, while also contacting the owners and the police. If you can find my button you can deactivate me. But your girlfriend told me you wasn't very good at that. The Back Door Sensor has your exact location with its micro camera. Video Linked Maintained Recorded Voice and Video Surveillance, can and will be used in the court of law)</Ink>'
        <Tooltip role="tooltip">Edit Action</Tooltip>
      </ActionText>
    ),
  },
  { id: 5, up: true, down: true, text: <ActionText $indent>END-REP</ActionText> },
  { id: 6, up: true, text: <ActionText>END-IF</ActionText> },
];

const ActionsTable = () => (
  <ActionTable>
    <colgroup>
      <Col $width={70} />
      <col />
      <Col $width={41} />
      <Col $width={40} />
      <Col $width={46} />
      <Col $width={49} />
      <Col $width={44} />
      <Col $width={39} />
    </colgroup>
    <thead>
      <HeadRow>
        <MarkCell><CellBox $lift={3}><button aria-label="Copy actions"><CopyIcon /></button></CellBox></MarkCell>
        <HeadText>Actions for <Strong>no ones home test</Strong></HeadText>
        <ToolCell><CellBox><UpIcon big /></CellBox></ToolCell>
        <ToolCell><CellBox><DownIcon big /></CellBox></ToolCell>
        <ToolCell><CellBox $drop={2}><PlusIcon sw={3} /></CellBox></ToolCell>
        <ToolCell><CellBox $drop={3}><CrossIcon /></CellBox></ToolCell>
        <ToolCell><CellBox $lift={2}><ScissorsIcon /></CellBox></ToolCell>
        <ToolCell><CellBox><TrashIcon big /></CellBox></ToolCell>
      </HeadRow>
    </thead>
    <tbody>
      {actions.map(({ id, text, up, down }) => (
        <ActionRow key={id}>
          <MarkCell><CellBox $lift={5}><Tick type="checkbox" aria-label={`Select action ${id}`} /></CellBox></MarkCell>
          <TextCell>{text}</TextCell>
          <ToolCell><CellBox $lift={5}>{up && <button aria-label="Move up"><UpIcon /></button>}</CellBox></ToolCell>
          <ToolCell><CellBox $lift={5}>{down && <button aria-label="Move down"><DownIcon /></button>}</CellBox></ToolCell>
          <ToolCell><CellBox $drop={2}><Ink as="button" $color="#007a00" aria-label="Insert action"><PlusIcon /></Ink></CellBox></ToolCell>
          <ToolCell><CellBox $lift={5}><Tick type="checkbox" aria-label={`Disable action ${id}`} /></CellBox></ToolCell>
          <ToolCell><CellBox $lift={2}><button aria-label="Cut action"><ScissorsIcon /></button></CellBox></ToolCell>
          <ToolCell><CellBox><Ink as="button" $color="#f50000" aria-label="Delete action"><TrashIcon /></Ink></CellBox></ToolCell>
        </ActionRow>
      ))}
    </tbody>
  </ActionTable>
);

const StatusIcons = () => (
  <StatusGroup>
    <svg width="22" height="24" viewBox="0 0 22 24" fill="#fff">
      {[0, 1, 2, 3, 4, 5, 6, 7, 8].map(i => (
        <circle key={i} cx={3 + (i % 3) * 8} cy={4 + Math.floor(i / 3) * 8} r="2.700" opacity={(i > 2 && i < 6) || i === 7 ? 1 : 0.4} />
      ))}
    </svg>
    <HouseTree size={28} house="#fff" tree="#330a9f" />
    <svg width="24" height="19"><rect width="24" height="19" rx="4" fill="#fff" /><path d="M3 3v13M8 5v9M12 5v9M16 5v9M20 5v9" stroke="#330a9f" strokeWidth="1.800" /></svg>
    <Line w={19} sw={1.8}><circle cx="9.500" cy="9.500" r="8.300" /><circle cx="9.500" cy="7.500" r="3" fill="#fff" /><path d="M5 14q4.500-5 9 0-4.500 3.500-9 0z" fill="#fff" /></Line>
    <Line w={12} h={18} sw={1.6}><path d="M1 5l10 8-5 4V1l5 4L1 13" /></Line>
    <Line w={20} h={18} sw={1.6}><path d="M3.500 12A8 8 0 1 0 3 7M1 8l2.300 2.500L6 8M11 4.500V10l3 3" /></Line>
    <svg width="34" height="17"><rect x=".7" y=".7" width="29" height="15.500" rx="4.500" fill="none" stroke="#a596d6" strokeWidth="1.300" /><rect x="3" y="3" width="14" height="11" rx="2.500" fill="#fff" /><path d="M31.500 6q2 2.500 0 5z" fill="#a596d6" /></svg>
    <Line w={22} h={17} sw={2.6}><path d="M1.500 6q9.500-9 19 0M5 10q6-5.500 12 0" strokeLinecap="butt" /><path d="M11 14v.2" strokeWidth="4" /></Line>
    <Line w={18} sw={2}><circle cx="7.500" cy="7.500" r="6" /><path d="M12 12l5 5" /></Line>
    <svg width="19" height="19"><rect x=".8" y=".8" width="17.400" height="7" rx="3.500" fill="none" stroke="#fff" strokeWidth="1.500" /><circle cx="4.500" cy="4.300" r="2.500" fill="#fff" /><rect y="10.500" width="19" height="8.500" rx="4.200" fill="#fff" /><circle cx="14.500" cy="14.700" r="2.700" fill="#330a9f" /></svg>
    <svg width="19" height="19"><defs><radialGradient id="siri"><stop offset="0" stopColor="#fff" /><stop offset=".35" stopColor="#c94f8c" /><stop offset=".7" stopColor="#3a9a9a" /><stop offset="1" stopColor="#253a66" /></radialGradient></defs><circle cx="9.500" cy="9.500" r="9.500" fill="url(#siri)" /></svg>
    <Clock><span>Wed 19 Oct</span><span>19:23</span></Clock>
  </StatusGroup>
);

class App extends React.PureComponent {
  render() {
    return (
      <Desktop>
        <GlobalStyle />
        <MenuBar>
          <MenuGroup>
            <FaApple size={21} />
            <MenuItem $strong>Safari</MenuItem>
            {['File', 'Edit', 'View', 'History', 'Bookmarks', 'Window', 'Help'].map(name => (
              <MenuItem key={name}>{name}</MenuItem>
            ))}
          </MenuGroup>
          <StatusIcons />
        </MenuBar>

        <BrowserWindow>
          <Toolbar>
            <ToolbarLeft>
              <Lights>
                <Light $color="#fe5f57" aria-label="Close" />
                <Light $color="#febc2e" aria-label="Minimise" />
                <Light $color="#28c840" aria-label="Zoom" />
              </Lights>
              <SidebarGroup>
                <SidebarToggle aria-label="Sidebar">
                  <Line w={26} h={21} sw={1.6}><rect x="1" y="1" width="24" height="19" rx="3" /><path d="M10 1v19M4 5h2.500M4 8h2.500M4 11h2.500" /></Line>
                </SidebarToggle>
                <button aria-label="Tab groups"><Line w={11} h={8}><path d="M1.500 1.500l4 4 4-4" /></Line></button>
              </SidebarGroup>
              <HistoryButtons>
                <button aria-label="Back"><Line w={12} h={20} sw={2.2}><path d="M10 2 2 10l8 8" /></Line></button>
                <Ink as="button" $color="#626065" aria-label="Forward"><Line w={12} h={20} sw={2.2}><path d="M2 2l8 8-8 8" /></Line></Ink>
              </HistoryButtons>
              <ShieldButton aria-label="Privacy report">
                <Line w={20} h={23} sw={1.8}><path d="M10 1l8 3v8q0 6-8 10-8-4-8-10V4z" /><path d="M10 1v21Q2 18 2 12V4z" fill="currentColor" /></Line>
              </ShieldButton>
            </ToolbarLeft>
            <AddressBar>
              <AddressInput aria-label="Address" defaultValue="192.168.4.99" />
              <button aria-label="Reload"><Line w={16} h={18} sw={1.8}><path d="M9 4.500A6 6 0 1 0 14 10M7 1l3.500 3.500L7 8" /></Line></button>
            </AddressBar>
            <ToolbarRight>
              <button aria-label="Downloads"><Line w={24} sw={1.7}><circle cx="12" cy="12" r="10.500" /><path d="M12 7v10M8 13l4 4 4-4" /></Line></button>
              <button aria-label="Share"><Line w={22} h={26} sw={1.7}><path d="M7 9H4Q2 9 2 11v11q0 2 2 2h14q2 0 2-2V11q0-2-2-2h-3M11 16V2M7 5.500 11 1.500l4 4" /></Line></button>
              <button aria-label="New tab"><Line w={19} sw={1.8}><path d="M9.500 1v17M1 9.500h17" /></Line></button>
              <button aria-label="Tab overview"><Line w={24} sw={1.7}><rect x="7" y="7" width="16" height="16" rx="3" /><path d="M7 17H4q-3 0-3-3V4q0-3 3-3h10q3 0 3 3v3" /></Line></button>
            </ToolbarRight>
          </Toolbar>

          <TabStrip>
            {tabs.map(tab => (
              <Tab key={tab.name} aria-label={tab.name} $active={!!tab.label}>
                <TabIcon tab={tab} />
                {tab.label}
              </Tab>
            ))}
          </TabStrip>

          <HubHeader>
            <Brand href="#">
              <HubMark size={70} color="#fff" />
              <BrandText>
                <BrandName>Hubitat<Registered>®</Registered></BrandName>
                <BrandTag>ELEVATE YOUR ENVIRONMENT</BrandTag>
              </BrandText>
            </Brand>
            <HubTitle>no ones home test <Stopped>(Stopped)</Stopped></HubTitle>
            <HubTools>
              magichome
              <button aria-label="Messages"><Line w={28} sw={2.2}><path d="M1.500 26.500l2-7A12 12 0 1 1 9 25z" /></Line></button>
              <button aria-label="Help"><Line w={28} sw={2.2}><circle cx="14" cy="14" r="12.700" /><path d="M10 11q0-4 4-4t4 4q0 2-4 4v2M14 20.500v.3" /></Line></button>
              <button aria-label="Log out"><Line w={28} sw={2.2}><path d="M10 1.500H5Q2 1.500 2 4v20q0 2.500 3 2.500h5M10 14h17M20 7l7 7-7 7" /></Line></button>
            </HubTools>
          </HubHeader>

          <HubBody>
            <SideNav>
              <NavItems items={navMain} />
              <NavSection>
                Developer tools
                <Line w={18} h={12} sw={2.5}><path d="M2 10l7-7 7 7" /></Line>
              </NavSection>
              <NavItems items={navTools} />
            </SideNav>
            <Scroller>
              <Card>
                <ActionsTable />
                <NewRow>
                  <NewMark aria-label="Add action"><PlusIcon size={22} /></NewMark>
                  <NewButton>
                    <Line w={20} sw={2.2}><path d="M19 10H2M9.500 2 1.500 10l8 8" /></Line>
                    Create New Action
                  </NewButton>
                </NewRow>
                <Note>You can create and manage <Strong>Conditions</Strong> used in Conditional Actions and Expressions below:</Note>
                <ManageBox href="#">
                  <ManageTitle>Manage Conditions</ManageTitle>
                  mums Hubitat tracker, richards iPhone Hubitat tracker all not
                </ManageBox>
              </Card>
              <ScrollTrack><ScrollThumb /></ScrollTrack>
            </Scroller>
          </HubBody>

          <HubFooter>
            <FooterLinks>
              <a href="#">Documentation</a>
              <a href="#">Community</a>
              <a href="#">Videos</a>
              <a href="#">FAQ</a>
            </FooterLinks>
            <FooterLinks $small>
              <a href="#">Terms of Service</a>
              <span>Copyright 2022 Hubitat, Inc.</span>
            </FooterLinks>
          </HubFooter>
        </BrowserWindow>

        <DockArea>
          <Dock>
            <DockGroup items={dockMain} />
            <DockDivider />
            <DockGroup items={dockRecent} />
            <DockDivider />
            <DockGroup items={dockEnd} />
          </Dock>
        </DockArea>
      </Desktop>
    );
  }
}

export default App;
